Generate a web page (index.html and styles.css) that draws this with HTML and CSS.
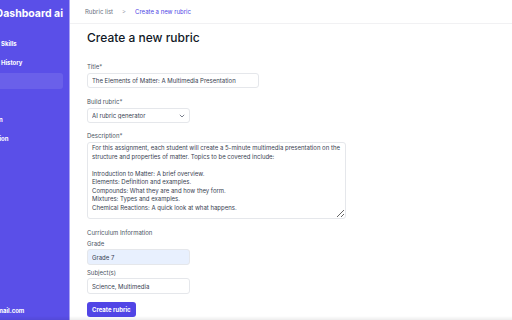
FILE: index.html
```html
<!DOCTYPE html>
<html>
<head>
  <title>Create a new rubric</title>
  <link rel="stylesheet" href="styles.css">
</head>
<body>
  <div class="sidebar">
    <div class="sidebar-inner">
      <div class="brand"><span class="brand-logo"></span>Dashboard ai</div>

      <nav class="nav">
        <a class="nav-item"><span class="nav-icon"></span>Your Skills</a>
        <a class="nav-item"><span class="nav-icon"></span>Your History</a>
        <a class="nav-item active"><span class="nav-icon"></span>New</a>
        <a class="nav-item"><span class="nav-icon"></span>Help</a>
        <a class="nav-item"><span class="nav-icon"></span>Learn</a>
        <a class="nav-item"><span class="nav-icon"></span>Version</a>
      </nav>

      <div class="user-email">teacher@gmail.com</div>
    </div>
  </div>

  <div class="main">
    <div class="topbar">
      <span class="crumb">Rubric list</span>
      <span class="crumb-sep">&gt;</span>
      <span class="crumb current">Create a new rubric</span>
    </div>

    <div class="content">
      <h1>Create a new rubric</h1>

      <form class="rubric-form">
        <div class="field">
          <label for="title">Title*</label>
          <input type="text" id="title" class="input title-input" value="The Elements of Matter: A Multimedia Presentation">
        </div>

        <div class="field select-field">
          <label for="build">Build rubric*</label>
          <div class="select-wrap">
            <select id="build" class="input select">
              <option>AI rubric generator</option>
            </select>
            <svg class="chevron" width="6" height="4" viewBox="0 0 6 4"><path d="M0.8 0.8 L3 3 L5.2 0.8" fill="none" stroke="#6b7280" stroke-width="0.9"/></svg>
          </div>
        </div>

        <div class="field">
          <label for="description">Description*</label>
          <textarea id="description" class="input textarea">For this assignment, each student will create a 5-minute multimedia presentation on the structure and properties of matter. Topics to be covered include:

Introduction to Matter: A brief overview.
Elements: Definition and examples.
Compounds: What they are and how they form.
Mixtures: Types and examples.
Chemical Reactions: A quick look at what happens.</textarea>
        </div>

        <div class="section-title">Curriculum Information</div>

        <div class="field small-gap">
          <label for="grade">Grade</label>
          <input type="text" id="grade" class="input short autofilled" value="Grade 7">
        </div>

        <div class="field small-gap">
          <label for="subjects">Subject(s)</label>
          <input type="text" id="subjects" class="input short" value="Science, Multimedia">
        </div>

        <button type="button" class="btn-primary">Create rubric</button>
      </form>
    </div>
  </div>

  <div class="bottom-fade"></div>
</body>
</html>
```

FILE: styles.css
```css
* {
  box-sizing: border-box;
}

body {
  margin: 0;
  height: 320px;
  display: flex;
  overflow: hidden;
  font-family: Inter, "Liberation Sans", sans-serif;
  color: #374151;
  background: #fff;
}

/* sidebar */
.sidebar {
  width: 70px;
  flex-shrink: 0;
  background-color: #5a4fe8;
  border-right: 1px solid #a9a2f4;
  overflow: hidden;
  color: #fff;
}

.sidebar-inner {
  margin-left: -39px;
  width: 102px;
  height: 100%;
  display: flex;
  flex-direction: column;
}

.brand {
  display: flex;
  align-items: center;
  gap: 6px;
  height: 26px;
  flex-shrink: 0;
  padding-left: 14px;
  font-size: 10.5px;
  font-weight: 700;
  white-space: nowrap;
}

.brand-logo {
  width: 18px;
  height: 18px;
  border-radius: 4px;
  background: rgba(255, 255, 255, 0.2);
}

.nav {
  display: flex;
  flex-direction: column;
  gap: 3px;
  margin-top: 9px;
}

.nav-item {
  display: flex;
  align-items: center;
  gap: 6px;
  height: 16px;
  padding: 0 8px 0 9px;
  border-radius: 3px;
  font-size: 6px;
  font-weight: 700;
  white-space: nowrap;
}

.nav-icon {
  width: 10px;
  height: 10px;
  flex-shrink: 0;
}

.nav-item.active {
  background-color: rgba(255, 255, 255, 0.1);
}

.user-email {
  margin-top: auto;
  margin-bottom: 5px;
  padding-left: 4px;
  font-size: 6px;
  line-height: 8px;
  font-weight: 700;
  white-space: nowrap;
}

/* main */
.main {
  flex: 1;
  display: flex;
  flex-direction: column;
}

.topbar {
  height: 24px;
  flex-shrink: 0;
  display: flex;
  align-items: center;
  gap: 9px;
  padding-left: 15px;
  border-bottom: 1px solid #f1f1f3;
  font-size: 6px;
}

.crumb {
  color: #6b7280;
}

.crumb-sep {
  color: #9ca3af;
}

.crumb.current {
  color: #4f46e5;
}

.content {
  padding: 6px 0 0 17px;
}

h1 {
  margin: 0;
  font-size: 12px;
  line-height: 16px;
  font-weight: 500;
  color: #111827;
}

.rubric-form {
  display: flex;
  flex-direction: column;
  align-items: flex-start;
  margin-top: 16px;
}

.field {
  display: flex;
  flex-direction: column;
  margin-bottom: 9px;
}

.field label,
.section-title {
  font-size: 6px;
  line-height: 9px;
  color: #4b5563;
  margin-bottom: 2px;
}

.input {
  display: block;
  font-family: Inter, "Liberation Sans", sans-serif;
  font-size: 6px;
  color: #374151;
  height: 15px;
  padding: 0 4px;
  border: 1px solid #e5e7eb;
  border-radius: 3px;
  background: #fff;
  outline: none;
}

.title-input {
  width: 172px;
}

.select-field {
  margin-bottom: 8px;
}

.select-wrap {
  position: relative;
  width: 103px;
}

.select {
  width: 103px;
  height: 15px;
  appearance: none;
  -webkit-appearance: none;
}

.chevron {
  position: absolute;
  right: 5px;
  top: 6px;
}

.textarea {
  width: 259px;
  height: 77px;
  padding: 1px 4px;
  line-height: 8.5px;
  resize: vertical;
  overflow: hidden;
}

.section-title {
  margin-bottom: 2px;
}

.field.small-gap {
  margin-bottom: 3px;
}

.field.small-gap label {
  margin-bottom: 1px;
}

.short {
  width: 103px;
  height: 16px;
}

.autofilled {
  background-color: #e8f0fe;
}

.btn-primary {
  margin-top: 5px;
  height: 15px;
  padding: 0 5px;
  border: none;
  border-radius: 3px;
  background-color: #5145e6;
  color: #fff;
  font-family: Inter, "Liberation Sans", sans-serif;
  font-size: 6px;
  font-weight: 700;
}

.bottom-fade {
  position: fixed;
  left: 0;
  right: 0;
  bottom: 0;
  height: 4px;
  background: linear-gradient(to bottom, rgba(0, 0, 0, 0), rgba(0, 0, 0, 0.07));
}
```
